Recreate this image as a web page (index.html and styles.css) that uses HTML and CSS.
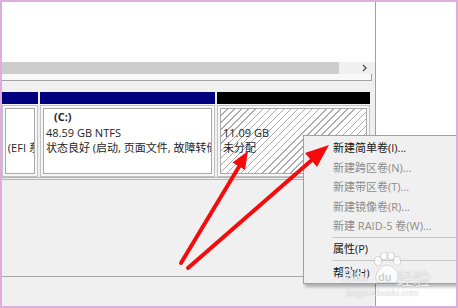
FILE: index.html
```html
<!DOCTYPE html>
<html>

<head>
    <title>磁盘管理</title>
    <meta name="viewport" content="width=device-width, initial-scale=1.0">
    <link rel="stylesheet" href="styles.css">
</head>

<body>
    <div class="shot">
        <div class="main">
            <div class="list"></div>
            <div class="hscroll">
                <div class="thumb"></div>
                <svg class="chev" width="8" height="12" viewBox="0 0 8 12">
                    <path d="M2 3 L5 6 L2 9" fill="none" stroke="#555" stroke-width="1.4"/>
                </svg>
            </div>
            <div class="gap"></div>

            <div class="disks">
                <div class="disk-row">
                    <div class="part efi">
                        <div class="bar navy"></div>
                        <div class="body">
                            <div class="inner">
                                <p class="shift">&nbsp;</p>
                                <p class="shift">&nbsp;</p>
                                <p class="shift">状态良好 (EFI 系统分区)</p>
                            </div>
                        </div>
                    </div>
                    <div class="part sys">
                        <div class="bar navy"></div>
                        <div class="body">
                            <div class="inner">
                                <p class="name">(C:)</p>
                                <p>48.59 GB NTFS</p>
                                <p>状态良好 (启动, 页面文件, 故障转储, 主分区)</p>
                            </div>
                        </div>
                    </div>
                    <div class="part free">
                        <div class="bar black"></div>
                        <div class="body">
                            <div class="inner hatch">
                                <p>&nbsp;</p>
                                <p>11.09 GB</p>
                                <p>未分配</p>
                            </div>
                        </div>
                    </div>
                </div>
            </div>

            <div class="status"></div>
        </div>
        <div class="side"></div>

        <div class="menu">
            <div class="item">新建简单卷(I)...</div>
            <div class="item off">新建跨区卷(N)...</div>
            <div class="item off">新建带区卷(T)...</div>
            <div class="item off">新建镜像卷(R)...</div>
            <div class="item off">新建 RAID-5 卷(W)...</div>
            <div class="sep"></div>
            <div class="item">属性(P)</div>
            <div class="sep wide"></div>
            <div class="item">帮助(H)</div>
        </div>

        <!-- red arrows drawn over the screenshot -->
        <svg class="arrows" width="458" height="308" viewBox="0 0 458 308">
            <line x1="181" y1="263" x2="240" y2="165" stroke="#f40c0c" stroke-width="4" stroke-linecap="round"/>
            <polygon points="248,151 245,170 232.5,162.5" fill="#f40c0c"/>
            <line x1="188" y1="268" x2="313" y2="159" stroke="#f40c0c" stroke-width="4" stroke-linecap="round"/>
            <polygon points="329,145 317,167 305,153" fill="#f40c0c"/>
        </svg>

        <div class="watermark">
            <svg class="paw" width="30" height="34" viewBox="0 0 30 34">
                <ellipse cx="6" cy="9" rx="3.5" ry="4.5"/>
                <ellipse cx="12" cy="4" rx="3.5" ry="4"/>
                <ellipse cx="19" cy="4" rx="3.5" ry="4"/>
                <ellipse cx="25" cy="9" rx="3.5" ry="4.5"/>
                <path d="M15 13 C8 13 3 22 4 27 C5 32 10 31 15 30 C20 31 26 32 27 27 C28 22 22 13 15 13 Z"/>
            </svg>
            <span class="bai">Bai</span>
            <span class="du">du</span>
            <span class="jy">经验</span>
            <span class="url">jingyan.baidu.com</span>
        </div>
    </div>
</body>

</html>
```

FILE: styles.css
```css
body {
    margin: 0;
    font-family: "Open Sans", "Noto Sans CJK SC", sans-serif;
    font-size: 11px;
    color: #1e1e1e;
}

.shot {
    position: relative;
    width: 458px;
    height: 308px;
    box-sizing: border-box;
    border: 2px solid #dcaedd;
    display: flex;
    overflow: hidden;
    background-color: #fff;
}

.main {
    width: 373px;
    display: flex;
    flex-direction: column;
    background-color: #f0f0f0;
}

.list {
    height: 60px;
    background-color: #fff;
}

.hscroll {
    height: 12px;
    width: 368px;
    display: flex;
    align-items: center;
    background-color: #f0f0f0;
}

.thumb {
    width: 337px;
    height: 12px;
    background-color: #cdcdcd;
}

.chev {
    margin-left: 22px;
}

.gap {
    height: 6px;
    width: 369px;
    background-color: #f8f8f8;
    border-bottom: 1px solid #a3a3a3;
    border-right: 1px solid #a3a3a3;
}

.disks {
    flex: 1;
    padding-top: 11px;
}

.disk-row {
    display: flex;
    gap: 2px;
    width: 368px;
    border-bottom: 3px double #b4b4b4;
}

.part {
    display: flex;
    flex-direction: column;
}

.efi {
    width: 36px;
}

.sys {
    width: 175px;
}

.free {
    width: 153px;
}

.bar {
    height: 12px;
}

.navy {
    background-color: #00007e;
}

.black {
    background-color: #000;
}

.body {
    margin-top: 1px;
    height: 72px;
    box-sizing: border-box;
    border: 1px solid #c2c2c2;
    padding: 2px;
    background-color: #f7f7f7;
}

.inner {
    height: 100%;
    box-sizing: border-box;
    border: 1px solid #a8a8a8;
    background-color: #fff;
    padding: 0 2px;
    overflow: hidden;
}

.inner p {
    margin: 0;
    line-height: 15.5px;
    white-space: nowrap;
}

.shift {
    margin-left: -47px !important;
}

.name {
    font-weight: bold;
    padding-left: 8px;
}

.hatch {
    background: repeating-linear-gradient(135deg, #fff 0 4px, #adadad 4px 5px);
}

.status {
    height: 29px;
    border-top: 1px solid #a6a6a6;
}

.side {
    flex: 1;
    background-color: #fff;
    border-left: 1px solid #a0a0a0;
}

.menu {
    position: absolute;
    left: 301px;
    top: 133px;
    width: 190px;
    padding: 2px 2px 0;
    background-color: #f0f0f0;
    border: 1px solid #a0a0a0;
    box-shadow: 2px 3px 3px rgba(0, 0, 0, 0.28);
}

.item {
    height: 19.5px;
    line-height: 19.5px;
    padding-left: 27px;
    white-space: nowrap;
    color: #151515;
}

.item.off {
    color: #8c8c8c;
}

.sep {
    height: 3px;
    margin-left: 26px;
    background: linear-gradient(#f0f0f0 1px, #c9c9c9 1px 2px, #f0f0f0 2px);
}

.sep.wide {
    height: 5px;
    background: linear-gradient(#f0f0f0 2px, #c9c9c9 2px 3px, #f0f0f0 3px);
}

.arrows {
    position: absolute;
    left: -2px;
    top: -2px;
}

.watermark {
    position: absolute;
    left: 336px;
    top: 246px;
    width: 100px;
    height: 56px;
}

.paw {
    position: absolute;
    left: 34px;
    top: 4px;
    fill: rgba(255, 255, 255, 0.75);
    stroke: rgba(150, 150, 150, 0.45);
    stroke-width: 0.8;
}

.bai,
.du,
.jy {
    position: absolute;
    color: rgba(255, 255, 255, 0.85);
    text-shadow: 0 0 1px rgba(120, 120, 120, 0.7);
    font-family: "Liberation Sans", sans-serif;
    font-weight: bold;
}

.bai {
    left: 4px;
    top: 18px;
    font-size: 17px;
}

.du {
    left: 40px;
    top: 23px;
    font-size: 11px;
    color: rgba(200, 200, 200, 0.9);
    text-shadow: none;
}

.jy {
    left: 58px;
    top: 17px;
    font-size: 17px;
    font-weight: normal;
    font-family: "Noto Sans CJK SC", sans-serif;
}

.url {
    position: absolute;
    left: 8px;
    top: 40px;
    font-size: 9px;
    color: rgba(255, 255, 255, 0.8);
    text-shadow: 0 0 1px rgba(140, 140, 140, 0.6);
    font-family: "Liberation Sans", sans-serif;
}
```
